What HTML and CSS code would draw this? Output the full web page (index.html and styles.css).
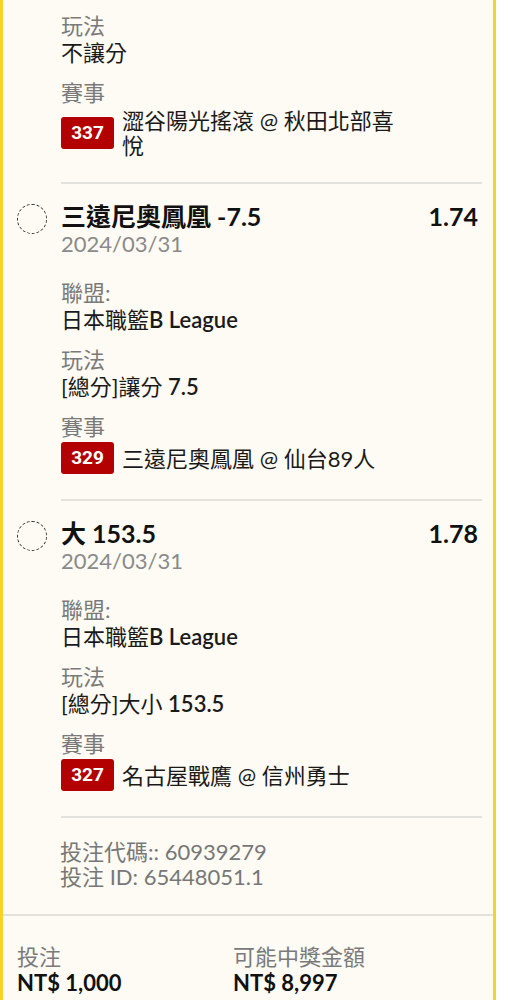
FILE: index.html
```html
<!DOCTYPE html>
<html lang="zh-Hant">
  <head>
    <meta charset="utf-8">
    <title>投注單</title>
    <link rel="stylesheet" href="styles.css">
  </head>
  <body>
    <div class="slip">
      <!-- first leg, scrolled so only the lower fields show -->
      <div class="leg leg-cut">
        <div class="leg-mark"></div>
        <div class="leg-body">
          <div class="field">
            <div class="label">玩法</div>
            <div class="value">不讓分</div>
          </div>
          <div class="field">
            <div class="label">賽事</div>
            <div class="match">
              <span class="badge">337</span>
              <span class="match-name">澀谷陽光搖滾 @ 秋田北部喜悅</span>
            </div>
          </div>
        </div>
      </div>

      <div class="leg">
        <div class="leg-mark"><span class="radio"></span></div>
        <div class="leg-body">
          <div class="leg-head">
            <div>
              <div class="pick">三遠尼奧鳳凰 -7.5</div>
              <div class="date">2024/03/31</div>
            </div>
            <div class="odds">1.74</div>
          </div>
          <div class="field">
            <div class="label">聯盟:</div>
            <div class="value">日本職籃<span class="latin">B League</span></div>
          </div>
          <div class="field">
            <div class="label">玩法</div>
            <div class="value">[總分]讓分 <span class="latin">7.5</span></div>
          </div>
          <div class="field">
            <div class="label">賽事</div>
            <div class="match">
              <span class="badge">329</span>
              <span class="match-name">三遠尼奧鳳凰 @ 仙台89人</span>
            </div>
          </div>
        </div>
      </div>

      <div class="leg">
        <div class="leg-mark"><span class="radio"></span></div>
        <div class="leg-body">
          <div class="leg-head">
            <div>
              <div class="pick">大 153.5</div>
              <div class="date">2024/03/31</div>
            </div>
            <div class="odds">1.78</div>
          </div>
          <div class="field">
            <div class="label">聯盟:</div>
            <div class="value">日本職籃<span class="latin">B League</span></div>
          </div>
          <div class="field">
            <div class="label">玩法</div>
            <div class="value">[總分]大小 <span class="latin">153.5</span></div>
          </div>
          <div class="field">
            <div class="label">賽事</div>
            <div class="match">
              <span class="badge">327</span>
              <span class="match-name">名古屋戰鷹 @ 信州勇士</span>
            </div>
          </div>
        </div>
      </div>

      <div class="bet-info">
        <div>投注代碼:: 60939279</div>
        <div>投注 ID: 65448051.1</div>
      </div>

      <div class="totals">
        <div>
          <div class="label">投注</div>
          <div class="amount">NT$ 1,000</div>
        </div>
        <div>
          <div class="label">可能中獎金額</div>
          <div class="amount">NT$ 8,997</div>
        </div>
      </div>
    </div>
  </body>
</html>
```

FILE: styles.css
```css
body {
    margin: 0;
    background-color: #fff;
    font-family: "Lato", "Noto Sans CJK TC", sans-serif;
    font-size: 22px;
    color: #1a1a1a;
  }

  .slip {
    width: 496px;
    box-sizing: border-box;
    border-left: 3px solid #f6d32b;
    border-right: 3px solid #f6d32b;
    background-color: #fdfbf3;
  }

  .leg {
    display: flex;
    padding-right: 11px;
  }

  .leg-mark {
    width: 58px;
    flex: none;
    padding-top: 20px;
  }

  .radio {
    display: block;
    width: 28px;
    height: 28px;
    margin-left: 14px;
    border: 1.5px dashed #333;
    border-radius: 50%;
  }

  .leg-body {
    flex: 1;
    padding: 17px 0 25px;
    border-bottom: 2px solid #e4e2dc;
  }

  .leg-cut .leg-body {
    padding-top: 12px;
    padding-bottom: 24px;
  }

  .leg-head {
    display: flex;
    justify-content: space-between;
    padding-right: 4px;
    margin-bottom: 22px;
  }

  .pick,
  .odds {
    font-size: 25px;
    font-weight: 700;
    line-height: 30px;
    color: #111;
  }

  .date {
    color: #8a8a8a;
    line-height: 26px;
  }

  .field + .field {
    margin-top: 13px;
  }

  .label {
    color: #7a7a7a;
    line-height: 27px;
  }

  .value {
    line-height: 27px;
  }

  .latin {
    font-weight: 600;
  }

  .match {
    display: flex;
    align-items: center;
    gap: 8px;
    margin-top: 2px;
  }

  .badge {
    flex: none;
    width: 53px;
    height: 32px;
    line-height: 32px;
    text-align: center;
    border-radius: 3px;
    background-color: #b30000;
    color: #fff;
    font-family: "Roboto", "Liberation Sans", sans-serif;
    font-size: 19px;
    font-weight: 700;
  }

  .match-name {
    max-width: 285px;
    line-height: 25px;
  }

  .bet-info {
    padding: 21px 0 25px 57px;
    color: #777;
    line-height: 25px;
    border-bottom: 2px solid #e4e2dc;
  }

  .totals {
    display: grid;
    grid-template-columns: 216px 1fr;
    padding: 27px 14px 6px;
  }

  .amount {
    font-weight: 700;
    line-height: 25px;
    color: #111;
  }
```
